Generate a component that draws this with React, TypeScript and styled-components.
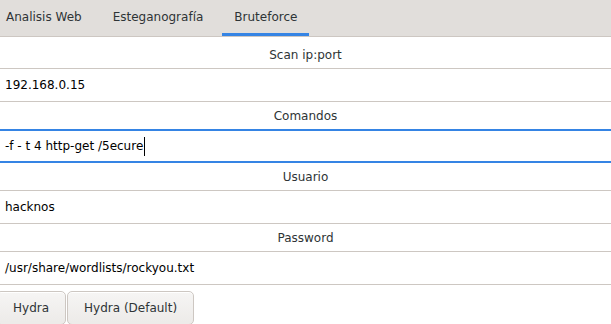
import React from "react";
import styled, { createGlobalStyle } from "styled-components";

const GlobalStyle = createGlobalStyle`
  html, body { margin: 0; padding: 0; background: #ffffff; }
  body { font-family: "DejaVu Sans", "Liberation Sans", sans-serif; }
`;

const Page = styled.div`
  width: 611px;
  height: 324px;
  overflow: hidden;
  background: #ffffff;
  color: #2e3436;
  font-size: 12px;
  display: flex;
  flex-direction: column;
`;

const TabBar = styled.div`
  height: 36px;
  flex: none;
  display: flex;
  background: #e1dedb;
  border-bottom: 1px solid #cdc7c2;
`;

const Tab = styled.div<{ $active?: boolean; $first?: boolean }>`
  display: flex;
  align-items: center;
  box-sizing: border-box;
  height: 36px;
  padding: 0 12px 0 ${(p) => (p.$first ? "6px" : "12px")};
  margin-right: 7px;
  border-bottom: 3px solid ${(p) => (p.$active ? "#3584e4" : "transparent")};
  color: #2e3436;
  white-space: nowrap;
`;

const FieldLabel = styled.div<{ $first?: boolean }>`
  height: 27px;
  flex: none;
  padding-top: ${(p) => (p.$first ? "4px" : "0")};
  display: flex;
  align-items: center;
  justify-content: center;
  color: #2e3436;
`;

const Entry = styled.div<{ $focused?: boolean }>`
  box-sizing: border-box;
  height: 34px;
  flex: none;
  display: flex;
  align-items: center;
  padding-left: 5px;
  border-top: ${(p) => (p.$focused ? "2px solid #3584e4" : "1px solid #cdc7c2")};
  border-bottom: ${(p) => (p.$focused ? "2px solid #3584e4" : "1px solid #cdc7c2")};
  color: #000000;
  white-space: nowrap;
`;

const Caret = styled.span`
  display: inline-block;
  width: 1px;
  height: 19px;
  background: #000000;
  margin-left: 1px;
`;

const ButtonRow = styled.div`
  display: flex;
  gap: 1px;
  padding-top: 6px;
  margin-left: -4px;
`;

const Button = styled.div`
  box-sizing: border-box;
  height: 34px;
  padding: 0 16px;
  display: flex;
  align-items: center;
  border: 1px solid #cdc7c2;
  border-radius: 5px;
  background: linear-gradient(to top, #edebe9 2px, #f6f5f4);
  box-shadow: inset 0 1px #ffffff;
  color: #2e3436;
  white-space: nowrap;
`;

export default function App() {
  return (
    <>
      <GlobalStyle />
      <Page>
        <TabBar>
          <Tab $first>Analisis Web</Tab>
          <Tab>Esteganografía</Tab>
          <Tab $active>Bruteforce</Tab>
        </TabBar>
        <FieldLabel $first>Scan ip:port</FieldLabel>
        <Entry>192.168.0.15</Entry>
        <FieldLabel>Comandos</FieldLabel>
        <Entry $focused>
          -f - t 4 http-get /5ecure
          <Caret />
        </Entry>
        <FieldLabel>Usuario</FieldLabel>
        <Entry>hacknos</Entry>
        <FieldLabel>Password</FieldLabel>
        <Entry>/usr/share/wordlists/rockyou.txt</Entry>
        <ButtonRow>
          <Button>Hydra</Button>
          <Button>Hydra (Default)</Button>
        </ButtonRow>
      </Page>
    </>
  );
}
